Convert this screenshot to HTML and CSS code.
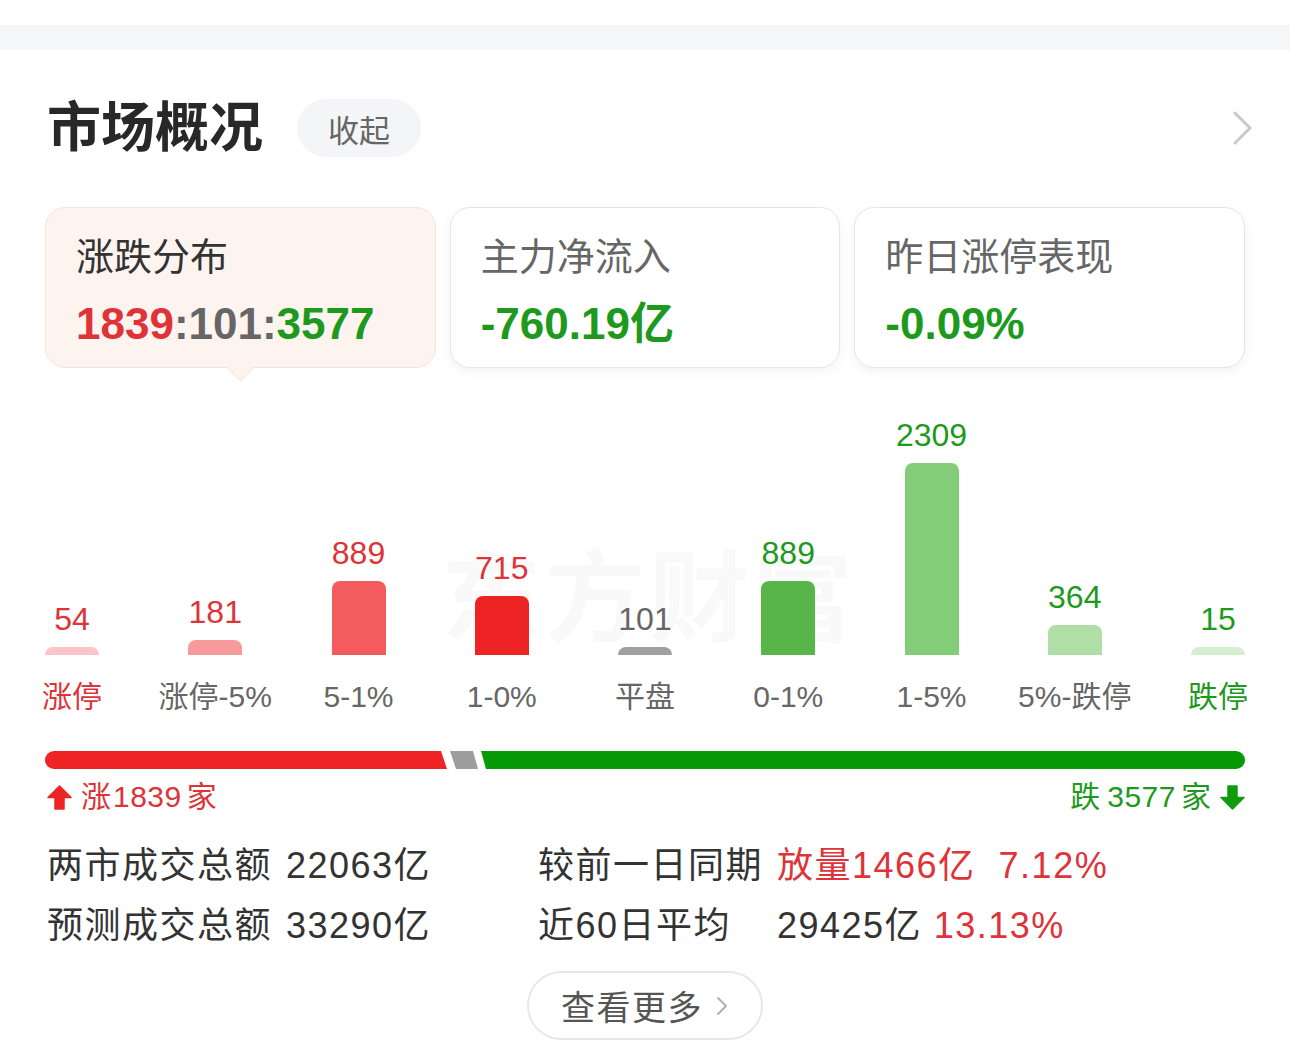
FILE: index.html
```html
<!DOCTYPE html>
<html lang="zh-CN">
	<head>
		<meta charset="utf-8" />
		<meta name="viewport" content="width=device-width, initial-scale=1">
		<title>市场概况</title>
		<link rel="stylesheet" href="styles.css">
	</head>
	<body>
		<div class="top-gap"></div>
		<div class="band"></div>
		<section class="market">
			<header class="market-head">
				<h1>市场概况</h1>
				<a class="pill" href="#">收起</a>
				<svg class="head-more" width="22" height="36" viewBox="0 0 22 36"><path d="M3 3 L18 18 L3 33" fill="none" stroke="#c9c9c9" stroke-width="3" stroke-linecap="round" stroke-linejoin="round"/></svg>
			</header>

			<div class="tabs">
				<div class="tab active">
					<div class="tab-title">涨跌分布</div>
					<div class="tab-value"><span class="up">1839</span><span class="flat">:101:</span><span class="down">3577</span></div>
				</div>
				<div class="tab">
					<div class="tab-title">主力净流入</div>
					<div class="tab-value down">-760.19亿</div>
				</div>
				<div class="tab">
					<div class="tab-title">昨日涨停表现</div>
					<div class="tab-value down">-0.09%</div>
				</div>
			</div>

			<div class="chart">
				<div class="watermark">东方财富</div>
				<div class="col">
					<div class="col-top"><span class="num up">54</span><div class="bar r1" style="height: 8px"></div></div>
					<div class="col-label up">涨停</div>
				</div>
				<div class="col">
					<div class="col-top"><span class="num up">181</span><div class="bar r2" style="height: 15px"></div></div>
					<div class="col-label">涨停-5%</div>
				</div>
				<div class="col">
					<div class="col-top"><span class="num up">889</span><div class="bar r3" style="height: 74px"></div></div>
					<div class="col-label">5-1%</div>
				</div>
				<div class="col">
					<div class="col-top"><span class="num up">715</span><div class="bar r4" style="height: 59px"></div></div>
					<div class="col-label">1-0%</div>
				</div>
				<div class="col">
					<div class="col-top"><span class="num flat">101</span><div class="bar g0" style="height: 8px"></div></div>
					<div class="col-label">平盘</div>
				</div>
				<div class="col">
					<div class="col-top"><span class="num down">889</span><div class="bar d1" style="height: 74px"></div></div>
					<div class="col-label">0-1%</div>
				</div>
				<div class="col">
					<div class="col-top"><span class="num down">2309</span><div class="bar d2" style="height: 192px"></div></div>
					<div class="col-label">1-5%</div>
				</div>
				<div class="col">
					<div class="col-top"><span class="num down">364</span><div class="bar d3" style="height: 30px"></div></div>
					<div class="col-label">5%-跌停</div>
				</div>
				<div class="col">
					<div class="col-top"><span class="num down">15</span><div class="bar d4" style="height: 8px"></div></div>
					<div class="col-label down">跌停</div>
				</div>
			</div>

			<div class="ratio">
				<div class="seg seg-up" style="width: 402px"></div>
				<div class="seg seg-flat" style="width: 28px"></div>
				<div class="seg seg-down"></div>
			</div>
			<div class="counts">
				<span class="count up">
					<svg width="25" height="25" viewBox="0 0 25 25"><path d="M12.5 1 L24 12.5 H17 V24 H8 V12.5 H1 Z" fill="#ee2424" stroke="#ee2424" stroke-width="1.5" stroke-linejoin="round"/></svg>
					<span>涨<span class="n">1839</span>家</span>
				</span>
				<span class="count down">
					<span>跌<span class="n">3577</span>家</span>
					<svg width="25" height="25" viewBox="0 0 25 25"><path d="M8 1 H17 V12.5 H24 L12.5 24 L1 12.5 H8 Z" fill="#119b11" stroke="#119b11" stroke-width="1.5" stroke-linejoin="round"/></svg>
				</span>
			</div>

			<div class="stats">
				<span class="stat-label">两市成交总额</span>
				<span>22063亿</span>
				<span class="stat-label">较前一日同期</span>
				<span class="up">放量1466亿&nbsp;&nbsp;7.12%</span>
				<span class="stat-label">预测成交总额</span>
				<span>33290亿</span>
				<span class="stat-label">近60日平均</span>
				<span>29425亿 <span class="up">13.13%</span></span>
			</div>

			<div class="more-wrap">
				<a class="more" href="#">查看更多
					<svg width="14" height="22" viewBox="0 0 14 22"><path d="M3 3 L11 11 L3 19" fill="none" stroke="#b0b0b0" stroke-width="2" stroke-linecap="round" stroke-linejoin="round"/></svg>
				</a>
			</div>
		</section>
	</body>
</html>
```

FILE: styles.css
```css
body {
	margin: 0;
	background: #fff;
	font-family: "Liberation Sans", "Noto Sans CJK SC", sans-serif;
	color: #333;
}

a {
	text-decoration: none;
}

.top-gap {
	height: 25px;
}

.band {
	height: 25px;
	background: #f5f6f8;
}

.market {
	padding: 49px 45px 0 45px;
}

.up {
	color: #dd3339;
}

.down {
	color: #1d9a1d;
}

.flat {
	color: #666;
}

/* header */

.market-head {
	display: flex;
	align-items: center;
	height: 58px;
}

.market-head h1 {
	margin: 0 34px 0 2px;
	font-size: 54px;
	font-weight: 700;
	line-height: 58px;
	color: #282828;
}

.pill {
	display: inline-flex;
	align-items: center;
	height: 58px;
	padding: 0 31px;
	border-radius: 29px;
	background: #f4f5f7;
	color: #666;
	font-size: 31px;
}

.head-more {
	margin-left: auto;
	margin-right: -9px;
}

/* summary tabs */

.tabs {
	display: grid;
	grid-template-columns: repeat(3, 1fr);
	gap: 14px;
	margin-top: 50px;
}

.tab {
	position: relative;
	height: 161px;
	box-sizing: border-box;
	padding: 24px 30px 0 30px;
	border: 1.5px solid #e6e6e6;
	border-radius: 20px;
	background: #fff;
	box-shadow: 0 4px 12px rgba(0, 0, 0, 0.05);
}

.tab.active {
	background: #fdf3ef;
	border-color: #f8e2da;
	box-shadow: none;
}

.tab.active::after {
	content: "";
	position: absolute;
	left: 50%;
	bottom: -11px;
	width: 18px;
	height: 18px;
	margin-left: -9px;
	background: #fdf3ef;
	border-right: 1.5px solid #f8e2da;
	border-bottom: 1.5px solid #f8e2da;
	transform: rotate(45deg);
	border-bottom-right-radius: 3px;
}

.tab-title {
	font-size: 38px;
	line-height: 50px;
	color: #666;
}

.tab.active .tab-title {
	color: #333;
}

.tab-value {
	margin-top: 14px;
	font-size: 44px;
	font-weight: 700;
	line-height: 56px;
}

/* distribution chart */

.chart {
	position: relative;
	display: flex;
	justify-content: space-between;
	height: 349px;
}

.watermark {
	position: absolute;
	left: 396px;
	top: 176px;
	font-size: 100px;
	font-weight: 700;
	letter-spacing: 4px;
	line-height: 110px;
	color: rgba(0, 0, 0, 0.022);
	white-space: nowrap;
	pointer-events: none;
}

.col {
	position: relative;
	display: flex;
	flex-direction: column;
	align-items: center;
	width: 54px;
}

.col-top {
	flex: 1;
	display: flex;
	flex-direction: column;
	justify-content: flex-end;
	align-items: center;
	width: 100%;
}

.num {
	font-size: 32px;
	line-height: 40px;
	margin-bottom: 8px;
	white-space: nowrap;
}

.bar {
	width: 100%;
	border-radius: 8px 8px 0 0;
}

.r1 { background: #fbc5c7; }
.r2 { background: #f69a9c; }
.r3 { background: #f45b5e; }
.r4 { background: #ee2424; }
.g0 { background: #a0a0a0; }
.d1 { background: #58b548; }
.d2 { background: #84cd78; }
.d3 { background: #afdfa7; }
.d4 { background: #d6efd1; }

.col-label {
	margin-top: 22px;
	font-size: 30px;
	line-height: 40px;
	color: #666;
	white-space: nowrap;
}

.col-label.up {
	color: #dd3339;
}

.col-label.down {
	color: #1d9a1d;
}

/* up / flat / down ratio */

.ratio {
	display: flex;
	gap: 3px;
	height: 18px;
	margin-top: 34px;
	border-radius: 9px;
	overflow: hidden;
}

.seg {
	height: 100%;
}

.seg-up {
	background: #ee2424;
	clip-path: polygon(0 0, calc(100% - 6px) 0, 100% 100%, 0 100%);
}

.seg-flat {
	background: #9d9d9d;
	clip-path: polygon(0 0, calc(100% - 5px) 0, 100% 100%, 6px 100%);
}

.seg-down {
	flex: 1;
	background: #079a07;
	clip-path: polygon(0 0, 100% 0, 100% 100%, 5px 100%);
}

.counts {
	display: flex;
	justify-content: space-between;
	margin-top: 10px;
	font-size: 30px;
	line-height: 36px;
}

.count {
	display: inline-flex;
	align-items: center;
	gap: 9px;
}

.count .n {
	margin: 0 5px 0 2px;
	letter-spacing: 0.5px;
}

.count.down .n {
	margin-left: 7px;
}

.count.up {
	margin-left: 2px;
}

/* turnover stats */

.stats {
	display: grid;
	grid-template-columns: 239px 252px 239px 1fr;
	margin-top: 21px;
	margin-left: 2px;
	font-size: 36px;
	line-height: 60px;
	color: #333;
	letter-spacing: 1.5px;
}

.stats .up {
	color: #dd3339;
}

.more-wrap {
	display: flex;
	justify-content: center;
	margin-top: 15px;
}

.more {
	display: inline-flex;
	align-items: center;
	gap: 12px;
	height: 69px;
	box-sizing: border-box;
	padding: 0 32px;
	border: 2px solid #e8e8e8;
	border-radius: 35px;
	font-size: 34px;
	color: #555;
	letter-spacing: 1.5px;
}
```
